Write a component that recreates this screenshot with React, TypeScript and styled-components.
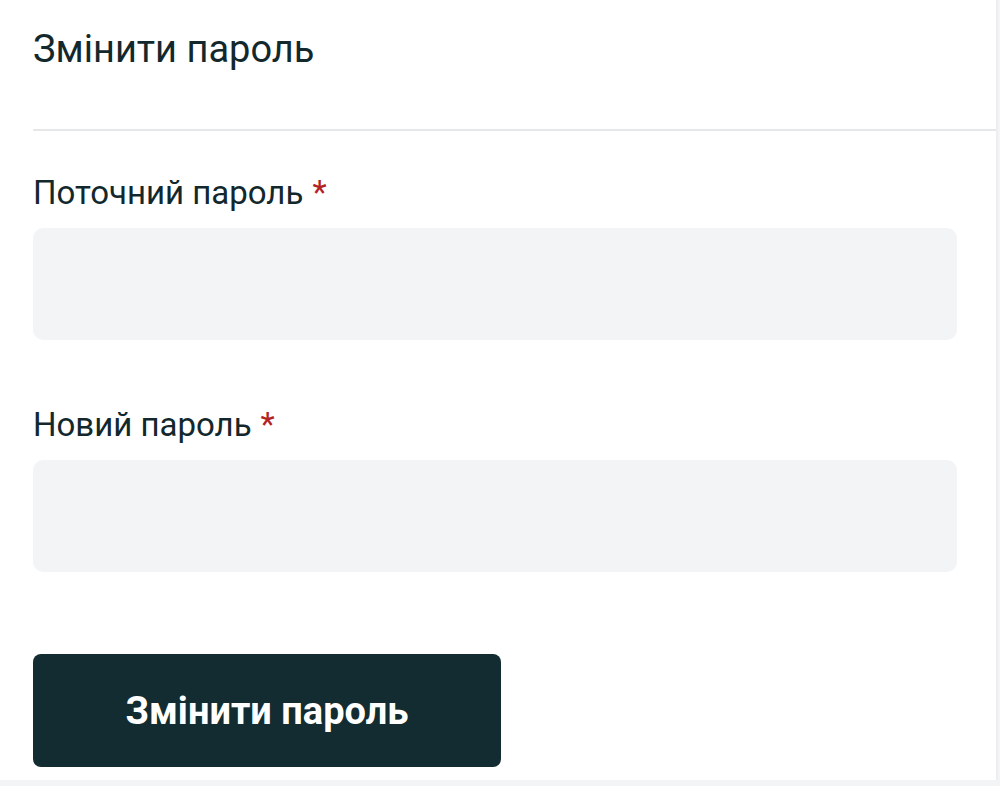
import React from "react";
import styled, { createGlobalStyle } from "styled-components";

const GlobalStyle = createGlobalStyle`
  html, body {
    margin: 0;
    padding: 0;
    background: #f3f4f6;
  }
  body {
    font-family: Roboto, "Noto Sans", sans-serif;
    color: #13282c;
  }
`;

const Card = styled.section`
  width: 998px;
  height: 780px;
  background: #ffffff;
  border-right: 2px solid #eceef0;
  box-sizing: border-box;
`;

const Header = styled.div`
  margin-left: 33px;
  height: 129px;
  border-bottom: 2px solid #e6e7e9;
  display: flex;
  align-items: flex-start;
`;

const Title = styled.h2`
  margin: 25px 0 0;
  font-size: 38px;
  font-weight: 400;
  line-height: 48px;
`;

const Form = styled.form`
  padding: 42px 39px 0 33px;
  display: flex;
  flex-direction: column;
`;

const Field = styled.div<{ $last?: boolean }>`
  display: flex;
  flex-direction: column;
  margin-bottom: ${(p) => (p.$last ? "0" : "65px")};
`;

const Label = styled.label`
  font-size: 33px;
  line-height: 40px;
  margin-bottom: 15px;
`;

const Required = styled.span`
  color: #b42323;
  margin-left: 9px;
`;

const Input = styled.input`
  height: 112px;
  border: none;
  border-radius: 10px;
  background: #f3f4f6;
  outline: none;
  padding: 0 24px;
  font-size: 30px;
  box-sizing: border-box;
`;

const Button = styled.button`
  margin-top: 82px;
  width: 468px;
  height: 113px;
  border: none;
  border-radius: 8px;
  background: #122c31;
  color: #ffffff;
  font-family: Roboto, "Noto Sans", sans-serif;
  font-size: 38px;
  font-weight: 700;
  cursor: pointer;
`;

export default function App() {
  return (
    <>
      <GlobalStyle />
      <Card>
        <Header>
          <Title>Змінити пароль</Title>
        </Header>
        <Form onSubmit={(e) => e.preventDefault()}>
          <Field>
            <Label>
              Поточний пароль<Required>*</Required>
            </Label>
            <Input type="password" />
          </Field>
          <Field $last>
            <Label>
              Новий пароль<Required>*</Required>
            </Label>
            <Input type="password" />
          </Field>
          <Button type="submit">Змінити пароль</Button>
        </Form>
      </Card>
    </>
  );
}
